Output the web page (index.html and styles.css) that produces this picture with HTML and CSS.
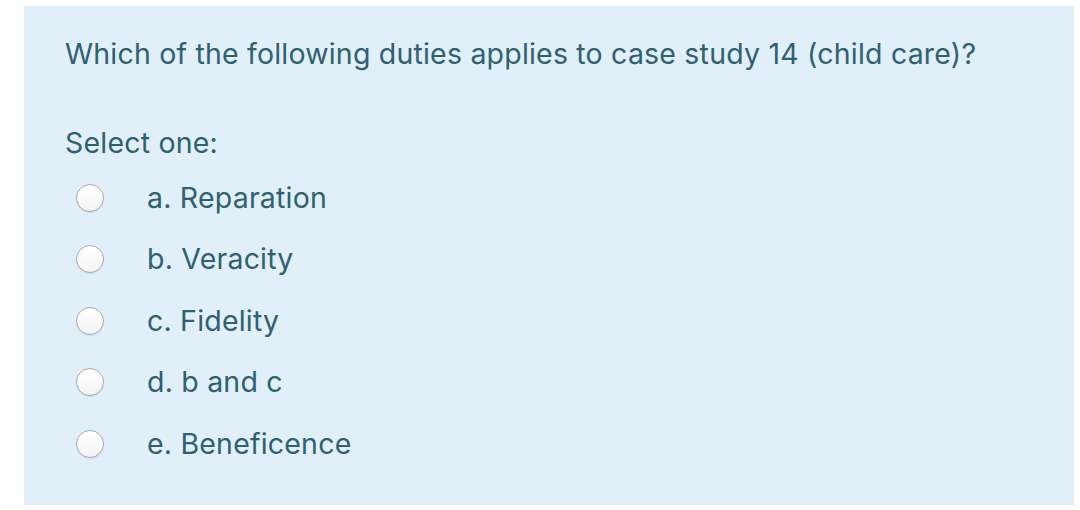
FILE: index.html
```html
<!doctype html>
<html lang="en">
<head>
  <meta charset="UTF-8">
  <title>Question</title>
  <link rel="stylesheet" href="styles.css">
</head>
<body>
  <div class="que">
    <p class="qtext">Which of the following duties applies to case study 14 (child care)?</p>
    <p class="prompt">Select one:</p>
    <ul class="answer">
      <li><span class="radio"></span><span>a. Reparation</span></li>
      <li><span class="radio"></span><span>b. Veracity</span></li>
      <li><span class="radio"></span><span>c. Fidelity</span></li>
      <li><span class="radio"></span><span>d. b and c</span></li>
      <li><span class="radio"></span><span>e. Beneficence</span></li>
    </ul>
  </div>
</body>
</html>
```

FILE: styles.css
```css
body {
  margin: 0;
  background: #fff;
  font-family: Inter, Roboto, "Liberation Sans", sans-serif;
  color: #2f6171;
}
.que {
  box-sizing: border-box;
  width: 1050px;
  height: 499px;
  margin: 6px 0 0 24px;
  padding: 30px 41px 0;
  background: #e1eff8;
}
.qtext,
.prompt,
.answer li {
  font-size: 28.5px;
  line-height: 36px;
  letter-spacing: .2px;
}
.qtext,
.prompt {
  margin: 0;
}
.prompt {
  margin-top: 53px;
}
.answer {
  list-style: none;
  margin: 6px 0 0;
  padding: 0;
}
.answer li {
  display: flex;
  align-items: center;
  height: 61.5px;
}
.radio {
  box-sizing: border-box;
  width: 28px;
  height: 28px;
  margin: 0 43px 0 11px;
  border: 1px solid #a9a9a9;
  border-radius: 50%;
  background: linear-gradient(#fff, #f4f4f4);
  box-shadow: 0 1px 1px rgba(0, 0, 0, .08);
}
```
